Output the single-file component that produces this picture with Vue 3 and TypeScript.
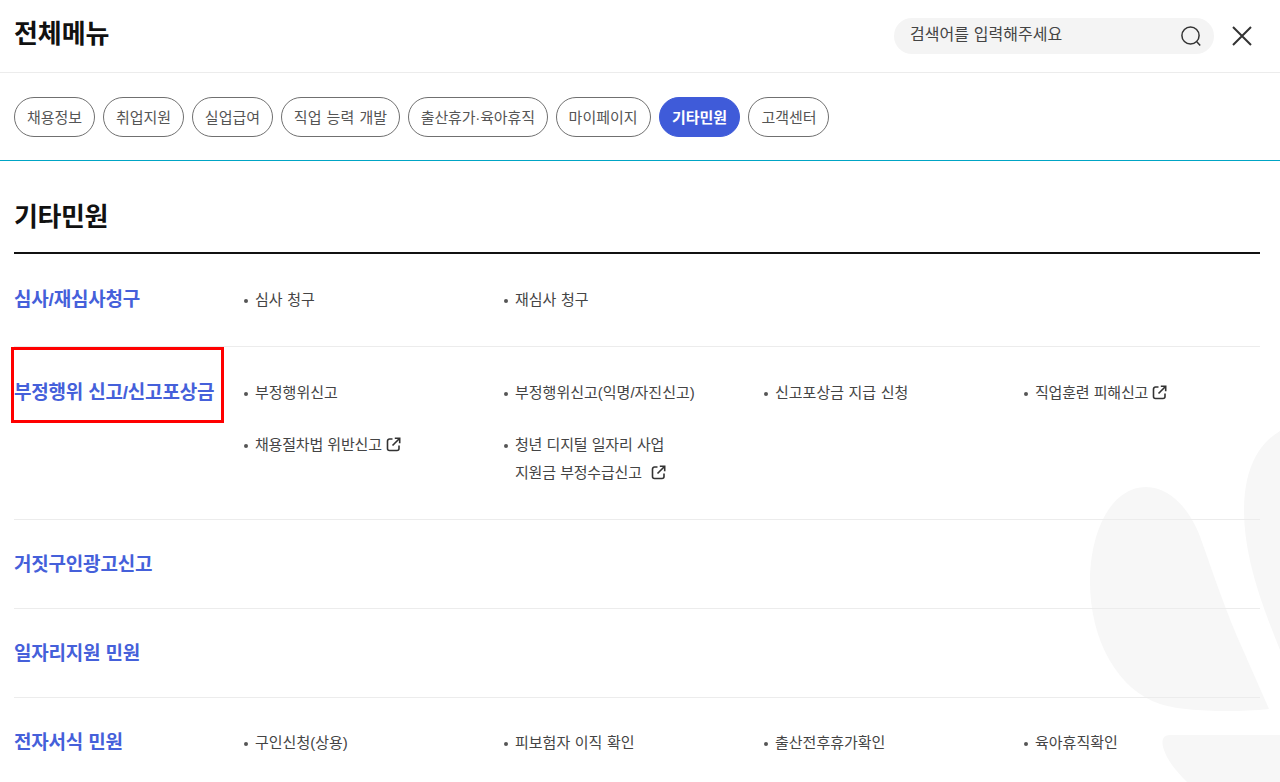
<script setup lang="ts">
interface Item { label: string; label2?: string; ext?: boolean }
interface Row { title: string; items: Item[]; cls: string; boxed?: boolean }
const chips: string[] = ['채용정보', '취업지원', '실업급여', '직업 능력 개발', '출산휴가·육아휴직', '마이페이지', '기타민원', '고객센터']
const rows: Row[] = [
  { title: '심사/재심사청구', cls: 'r1', items: [{ label: '심사 청구' }, { label: '재심사 청구' }] },
  { title: '부정행위 신고/신고포상금', cls: 'r2', boxed: true, items: [
    { label: '부정행위신고' }, { label: '부정행위신고(익명/자진신고)' }, { label: '신고포상금 지급 신청' }, { label: '직업훈련 피해신고', ext: true },
    { label: '채용절차법 위반신고', ext: true }, { label: '청년 디지털 일자리 사업', label2: '지원금 부정수급신고' },
  ] },
  { title: '거짓구인광고신고', cls: 'r3', items: [] },
  { title: '일자리지원 민원', cls: 'r3', items: [] },
  { title: '전자서식 민원', cls: 'r3', items: [{ label: '구인신청(상용)' }, { label: '피보험자 이직 확인' }, { label: '출산전후휴가확인' }, { label: '육아휴직확인' }] },
]
</script>

<template>
  <div class="page">
    <svg class="deco" width="1280" height="782" viewBox="0 0 1280 782" aria-hidden="true">
      <path d="M1146 487C1112 487 1090 530 1090 582C1090 640 1118 690 1160 704C1180 711 1230 713 1269 709L1236 634C1222 600 1212 570 1203 545C1192 510 1170 487 1146 487Z" fill="#f7f7f7" />
      <path d="M1280 431C1258 444 1244 470 1244 510C1244 560 1264 610 1280 650Z" fill="#f7f7f7" />
      <path d="M1170 735C1162 735 1161 742 1164 750C1168 762 1178 773 1187 782H1280V735C1240 735 1200 735 1170 735Z" fill="#f7f7f7" />
    </svg>

    <header class="top">
      <h1 class="page-title">전체메뉴</h1>
      <div class="top-right">
        <div class="search">
          <span class="placeholder">검색어를 입력해주세요</span>
          <svg width="22" height="22" viewBox="0 0 22 22" fill="none" stroke="#333" stroke-width="1.5">
            <circle cx="10.5" cy="10.5" r="8.6" />
            <path d="M16.8 16.8L20.2 20.4" />
          </svg>
        </div>
        <svg class="close" width="20" height="20" viewBox="0 0 20 20" fill="none" stroke="#333" stroke-width="2">
          <path d="M1 1L19 19M19 1L1 19" />
        </svg>
      </div>
    </header>

    <nav class="chips">
      <span v-for="c in chips" :key="c" class="chip" :class="{ active: c === '기타민원', narrow: c.includes('·') }">{{ c }}</span>
    </nav>

    <main class="content">
      <h2 class="section-title">기타민원</h2>
      <div v-for="r in rows" :key="r.title" class="row" :class="r.cls">
        <div class="row-title">
          <span>{{ r.title }}</span>
          <i v-if="r.boxed" class="redbox"></i>
        </div>
        <ul v-if="r.items.length" class="items">
          <li v-for="it in r.items" :key="it.label" :class="{ tight: it.ext || it.label2 }">
            <span class="txt">{{ it.label }}<template v-if="it.ext"><svg class="ext" width="15" height="15" viewBox="0 0 15 15" fill="none" stroke="#333" stroke-width="1.6"><path d="M6.5 2H3.5A2 2 0 0 0 1.500 4V11.500A2 2 0 0 0 3.500 13.500H11A2 2 0 0 0 13 11.500V8.500" /><path d="M6.500 8.500L13.500 1.500M8.800 1.300H13.700V6.200" /></svg></template></span>
            <span v-if="it.label2" class="txt second">{{ it.label2 }}<svg class="ext wide" width="15" height="15" viewBox="0 0 15 15" fill="none" stroke="#333" stroke-width="1.6"><path d="M6.5 2H3.5A2 2 0 0 0 1.500 4V11.500A2 2 0 0 0 3.500 13.500H11A2 2 0 0 0 13 11.500V8.500" /><path d="M6.500 8.500L13.500 1.500M8.800 1.300H13.700V6.200" /></svg></span>
          </li>
        </ul>
      </div>
    </main>
  </div>
</template>

<style>
html, body { margin: 0; overflow: hidden; background: #fff; }
</style>

<style scoped>
.page {
  position: relative;
  width: 1280px;
  height: 782px;
  overflow: hidden;
  background: #fff;
  font-family: "Liberation Sans", "Noto Sans CJK KR", sans-serif;
  color: #333;
}
.deco { position: absolute; left: 0; top: 0; }
.top {
  position: relative;
  height: 72px;
  box-sizing: content-box;
  border-bottom: 1px solid #ececec;
  display: flex;
  align-items: center;
  justify-content: space-between;
  padding: 0 28px 0 14px;
}
.page-title { margin: 0; font-size: 26px; font-weight: 700; color: #111; letter-spacing: -0.1px; line-height: 36px; position: relative; top: -2px; }
.top-right { display: flex; align-items: center; gap: 18px; }
.search {
  width: 320px;
  height: 36px;
  box-sizing: border-box;
  border-radius: 18px;
  background: #f4f4f4;
  display: flex;
  align-items: center;
  justify-content: space-between;
  padding: 0 12px 0 16px;
}
.placeholder { font-size: 16px; line-height: 22px; color: #444; word-spacing: 0.5px; position: relative; top: -1px; }
.close { display: block; }
.chips {
  position: relative;
  display: flex;
  gap: 8px;
  padding: 24px 14px 23px;
  height: 40px;
  box-sizing: content-box;
  border-bottom: 1px solid #00a5c5;
}
.chip {
  height: 40px;
  box-sizing: border-box;
  border: 1px solid #707070;
  border-radius: 20px;
  background: #fff;
  padding: 0 11.9px 2px;
  display: flex;
  align-items: center;
  font-size: 15px;
  color: #555;
  white-space: nowrap;
  word-spacing: 1px;
}
.chip.narrow { letter-spacing: -0.15px; }
.chip.active { background: #3f5bd9; border-color: #3f5bd9; color: #fff; font-weight: 700; padding: 0 12.4px 2px; }
.content { position: relative; padding: 0 20px 0 14px; }
.section-title {
  margin: 0;
  height: 93px;
  box-sizing: border-box;
  border-bottom: 2px solid #111;
  font-size: 26px;
  font-weight: 700;
  color: #111;
  letter-spacing: -0.4px;
  line-height: 36px;
  padding-top: 38px;
}
.row { display: flex; border-bottom: 1px solid #ececec; box-sizing: border-box; }
.r1 { height: 93px; padding-top: 32px; }
.r2 { height: 173px; padding-top: 32px; }
.r3 { height: 89px; padding-top: 31px; }
.row-title {
  position: relative;
  width: 229px;
  flex: none;
  font-size: 19px;
  font-weight: 700;
  color: #4560da;
  letter-spacing: -0.2px;
  line-height: 28px;
  white-space: nowrap;
}
.redbox {
  position: absolute;
  left: -3px;
  top: -32px;
  width: 213px;
  height: 76px;
  box-sizing: border-box;
  border: 3px solid #f00;
}
.items { list-style: none; margin: 0; padding: 0; display: grid; grid-template-columns: repeat(4, 260px); row-gap: 24px; align-content: start; }
.items li { position: relative; padding-left: 12px; font-size: 15px; line-height: 28px; color: #444; word-spacing: 0.4px; }
.items li.tight { letter-spacing: -0.2px; }
.items li::before { content: ""; position: absolute; left: 1px; top: 13px; width: 4px; height: 4px; border-radius: 50%; background: #555; }
.txt { display: block; white-space: nowrap; }
.ext { vertical-align: -2px; margin-left: 4px; }
.ext.wide { margin-left: 9px; }
</style>
